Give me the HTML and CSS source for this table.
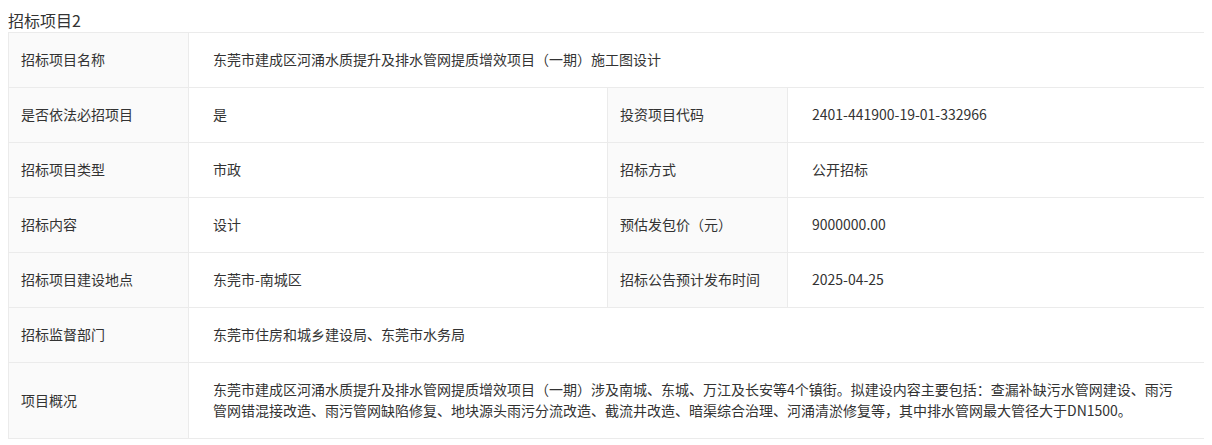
FILE: index.html
```html
<!DOCTYPE html>
<html lang="zh">
<head>
<meta charset="utf-8">
<link rel="stylesheet" href="styles.css">
</head>
<body>
<div class="title">招标项目2</div>
<table class="info">
  <colgroup>
    <col class="c-label"><col class="c-value"><col class="c-label"><col class="c-value2">
  </colgroup>
  <tr>
    <td class="label">招标项目名称</td>
    <td class="value" colspan="3">东莞市建成区河涌水质提升及排水管网提质增效项目（一期）施工图设计</td>
  </tr>
  <tr>
    <td class="label">是否依法必招项目</td>
    <td class="value">是</td>
    <td class="label">投资项目代码</td>
    <td class="value">2401-441900-19-01-332966</td>
  </tr>
  <tr>
    <td class="label">招标项目类型</td>
    <td class="value">市政</td>
    <td class="label">招标方式</td>
    <td class="value">公开招标</td>
  </tr>
  <tr>
    <td class="label">招标内容</td>
    <td class="value">设计</td>
    <td class="label">预估发包价（元）</td>
    <td class="value">9000000.00</td>
  </tr>
  <tr>
    <td class="label">招标项目建设地点</td>
    <td class="value">东莞市-南城区</td>
    <td class="label">招标公告预计发布时间</td>
    <td class="value">2025-04-25</td>
  </tr>
  <tr>
    <td class="label">招标监督部门</td>
    <td class="value" colspan="3">东莞市住房和城乡建设局、东莞市水务局</td>
  </tr>
  <tr>
    <td class="label">项目概况</td>
    <td class="value" colspan="3">东莞市建成区河涌水质提升及排水管网提质增效项目（一期）涉及南城、东城、万江及长安等4个镇街。拟建设内容主要包括：查漏补缺污水管网建设、雨污管网错混接改造、雨污管网缺陷修复、地块源头雨污分流改造、截流井改造、暗渠综合治理、河涌清淤修复等，其中排水管网最大管径大于DN1500。</td>
  </tr>
</table>
</body>
</html>
```

FILE: styles.css
```css
body {
  margin: 8px;
  background: #fff;
  font-family: "Microsoft YaHei", "Noto Sans CJK SC", "Noto Sans", sans-serif;
  color: #333;
}
.title {
  font-size: 16px;
  line-height: 24px;
  color: #333;
}
.info {
  width: 1200px;
  border-collapse: collapse;
  table-layout: fixed;
  font-size: 14px;
  line-height: 21px;
}
.c-label { width: 180px; }
.c-value { width: 419px; }
.c-value2 { width: 421px; }
.info td {
  border: 1px solid #ebebeb;
  padding: 16px 24px 17px;
  vertical-align: middle;
  color: #333;
}
.info td.label {
  background: #fafafa;
  padding-left: 12px;
  padding-right: 12px;
}
```
